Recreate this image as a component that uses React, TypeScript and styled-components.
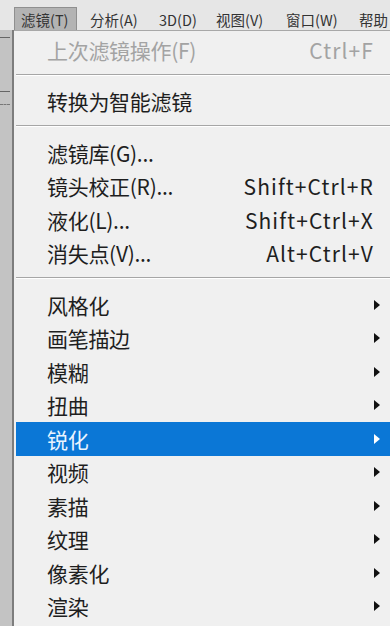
import React from "react";
import styled, { createGlobalStyle } from "styled-components";

const Global = createGlobalStyle`
  html, body { margin: 0; padding: 0; background: #efefef; }
  body { width: 390px; height: 626px; overflow: hidden; }
  #root { height: 626px; }
`;

const FONT = `"Noto Sans CJK SC", "Open Sans", sans-serif`;

const Screen = styled.div`
  display: flex;
  flex-direction: column;
  height: 626px;
  font-family: ${FONT};
`;

const MenuBar = styled.div`
  display: flex;
  align-items: flex-end;
  gap: 6px;
  height: 30px;
  background: #e6e6e6;
  padding-left: 14px;
  box-sizing: border-box;
`;

const BarItem = styled.div<{ $active?: boolean; $w: number }>`
  width: ${(p) => p.$w}px;
  flex: none;
  height: 23px;
  box-sizing: border-box;
  padding-left: 6px;
  display: flex;
  align-items: center;
  font-size: 14.5px;
  color: #333;
  white-space: nowrap;
  background: ${(p) => (p.$active ? "#b3b3b3" : "transparent")};
  border: 1px solid ${(p) => (p.$active ? "#8f8f8f" : "transparent")};
  border-bottom: none;
`;

const Body = styled.div`
  flex: 1;
  display: flex;
`;

const LeftStrip = styled.div`
  width: 12px;
  background: #c3c3c3;
  border-right: 2px solid #7d7d7d;
  display: flex;
  flex-direction: column;
  padding-top: 7px;
  gap: 52px;
`;

const StripMark = styled.div<{ $h: number }>`
  width: 10px;
  height: ${(p) => p.$h}px;
  border-top: 1px solid #666;
  border-bottom: ${(p) => (p.$h > 2 ? "1px dashed #777" : "none")};
`;

const Panel = styled.div`
  flex: 1;
  background: #f0f0f0;
  border-top: 1px solid #a8a8a8;
  padding: 2px 0 0 2px;
  display: flex;
  flex-direction: column;
`;

const Row = styled.div<{ $hl?: boolean; $disabled?: boolean }>`
  height: 33.5px;
  flex: none;
  display: flex;
  align-items: center;
  padding-left: 31px;
  padding-right: 17px;
  position: relative;
  font-size: 21px;
  letter-spacing: -0.3px;
  background: ${(p) => (p.$hl ? "#0b77d6" : "transparent")};
  color: ${(p) => (p.$hl ? "#eaf4ff" : p.$disabled ? "#a3a3a3" : "#1e1e1e")};
`;

const Label = styled.span`
  flex: 1;
  white-space: nowrap;
`;

const Shortcut = styled.span`
  white-space: nowrap;
  letter-spacing: 1.1px;
  margin-right: -1px;
`;

const Arrow = styled.span<{ $hl?: boolean }>`
  position: absolute;
  right: 10px;
  top: 50%;
  margin-top: -5px;
  width: 0;
  height: 0;
  border-top: 5px solid transparent;
  border-bottom: 5px solid transparent;
  border-left: 6px solid ${(p) => (p.$hl ? "#ffffff" : "#111")};
`;

const Separator = styled.div`
  height: 18px;
  flex: none;
  display: flex;
  align-items: flex-start;
  padding-top: 7px;
  box-sizing: border-box;
  &::after {
    content: "";
    display: block;
    width: 100%;
    height: 1px;
    background: #a6a6a6;
    box-shadow: 0 1px 0 #ffffff;
  }
`;

type Item =
  | { sep: true }
  | { label: string; shortcut?: string; sub?: boolean; hl?: boolean; disabled?: boolean };

const items: Item[] = [
  { label: "上次滤镜操作(F)", shortcut: "Ctrl+F", disabled: true },
  { sep: true },
  { label: "转换为智能滤镜" },
  { sep: true },
  { label: "滤镜库(G)..." },
  { label: "镜头校正(R)...", shortcut: "Shift+Ctrl+R" },
  { label: "液化(L)...", shortcut: "Shift+Ctrl+X" },
  { label: "消失点(V)...", shortcut: "Alt+Ctrl+V" },
  { sep: true },
  { label: "风格化", sub: true },
  { label: "画笔描边", sub: true },
  { label: "模糊", sub: true },
  { label: "扭曲", sub: true },
  { label: "锐化", sub: true, hl: true },
  { label: "视频", sub: true },
  { label: "素描", sub: true },
  { label: "纹理", sub: true },
  { label: "像素化", sub: true },
  { label: "渲染", sub: true },
];

const bar = [
  { t: "滤镜(T)", w: 63, active: true },
  { t: "分析(A)", w: 63 },
  { t: "3D(D)", w: 51 },
  { t: "视图(V)", w: 64 },
  { t: "窗口(W)", w: 67 },
  { t: "帮助", w: 40 },
];

export default function App() {
  return (
    <>
      <Global />
      <Screen>
        <MenuBar>
          {bar.map((b) => (
            <BarItem key={b.t} $w={b.w} $active={b.active}>
              {b.t}
            </BarItem>
          ))}
        </MenuBar>
        <Body>
          <LeftStrip>
            <StripMark $h={1} />
            <StripMark $h={12} />
          </LeftStrip>
          <Panel>
            {items.map((it, i) =>
              "sep" in it ? (
                <Separator key={i} />
              ) : (
                <Row key={i} $hl={it.hl} $disabled={it.disabled}>
                  <Label>{it.label}</Label>
                  {it.shortcut && <Shortcut>{it.shortcut}</Shortcut>}
                  {it.sub && <Arrow $hl={it.hl} />}
                </Row>
              )
            )}
          </Panel>
        </Body>
      </Screen>
    </>
  );
}
